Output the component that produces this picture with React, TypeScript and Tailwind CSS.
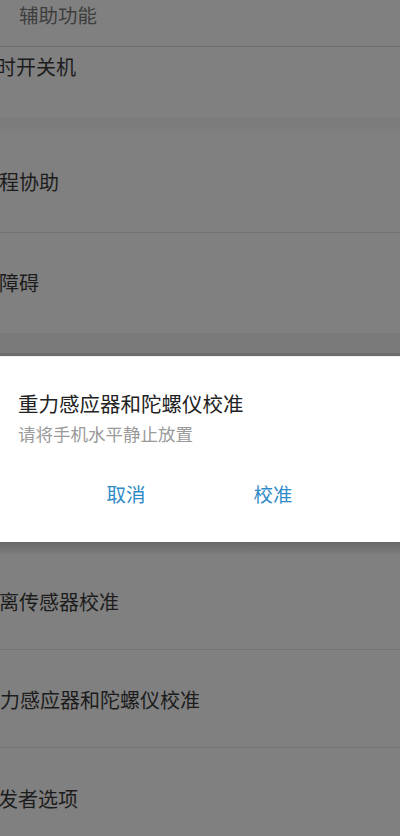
import React from "react";

const font = { fontFamily: '"Noto Sans CJK SC", "Noto Sans", sans-serif' };

function Row({ text, offset, h, pt, border = true }: { text: string; offset: string; h: string; pt: string; border?: boolean }) {
  return (
    <div className={`${h} ${pt} ${border ? "border-b border-[#727272]" : ""} overflow-hidden`}>
      <div className={`text-[20px] leading-[28px] text-[#1c1c1c] whitespace-nowrap ${offset}`}>{text}</div>
    </div>
  );
}

export default function App() {
  return (
    <div className="w-[400px] h-[836px] overflow-hidden bg-[#808080]" style={font}>
      <div className="h-[47px] border-b border-[#6f6f6f] pl-[19px] pt-[1px]">
        <div className="text-[19.5px] leading-[28px] text-[#3d3d3d]">辅助功能</div>
      </div>
      <Row text="定时开关机" offset="-ml-[24px]" h="h-[70px]" pt="pt-[6px]" border={false} />
      <div className="h-[16px] bg-gradient-to-b from-[#7b7b7b] to-[#7e7e7e]" />
      <Row text="远程协助" offset="-ml-[21px]" h="h-[100px]" pt="pt-[35px]" />
      <Row text="无障碍" offset="-ml-[21px]" h="h-[100px]" pt="pt-[36px]" border={false} />
      <div className="h-[23px] bg-[#7a7a7a] border-b-[3px] border-[#6c6c6c]" />
      <div className="h-[186px] bg-white border-t border-[#f0f0f0] px-[18px] pt-[32px]">
        <div className="text-[20.5px] leading-[28px] text-[#222222]">重力感应器和陀螺仪校准</div>
        <div className="mt-[5px] text-[17.5px] leading-[24px] text-[#9a9a9a]">请将手机水平静止放置</div>
        <div className="mt-[34px] flex">
          <div className="w-[216px] text-center text-[19.5px] leading-[28px] text-[#2f8bc8]">取消</div>
          <div className="w-[78px] text-center text-[19.5px] leading-[28px] text-[#2f8bc8]">校准</div>
        </div>
      </div>
      <div className="h-[12px] bg-gradient-to-b from-[#686868] to-[#7c7c7c]" />
      <Row text="距离传感器校准" offset="-ml-[21px]" h="h-[96px]" pt="pt-[34px]" />
      <Row text="重力感应器和陀螺仪校准" offset="-ml-[20px]" h="h-[98px]" pt="pt-[36px]" />
      <Row text="开发者选项" offset="-ml-[22px]" h="h-[100px]" pt="pt-[37px]" border={false} />
    </div>
  );
}
